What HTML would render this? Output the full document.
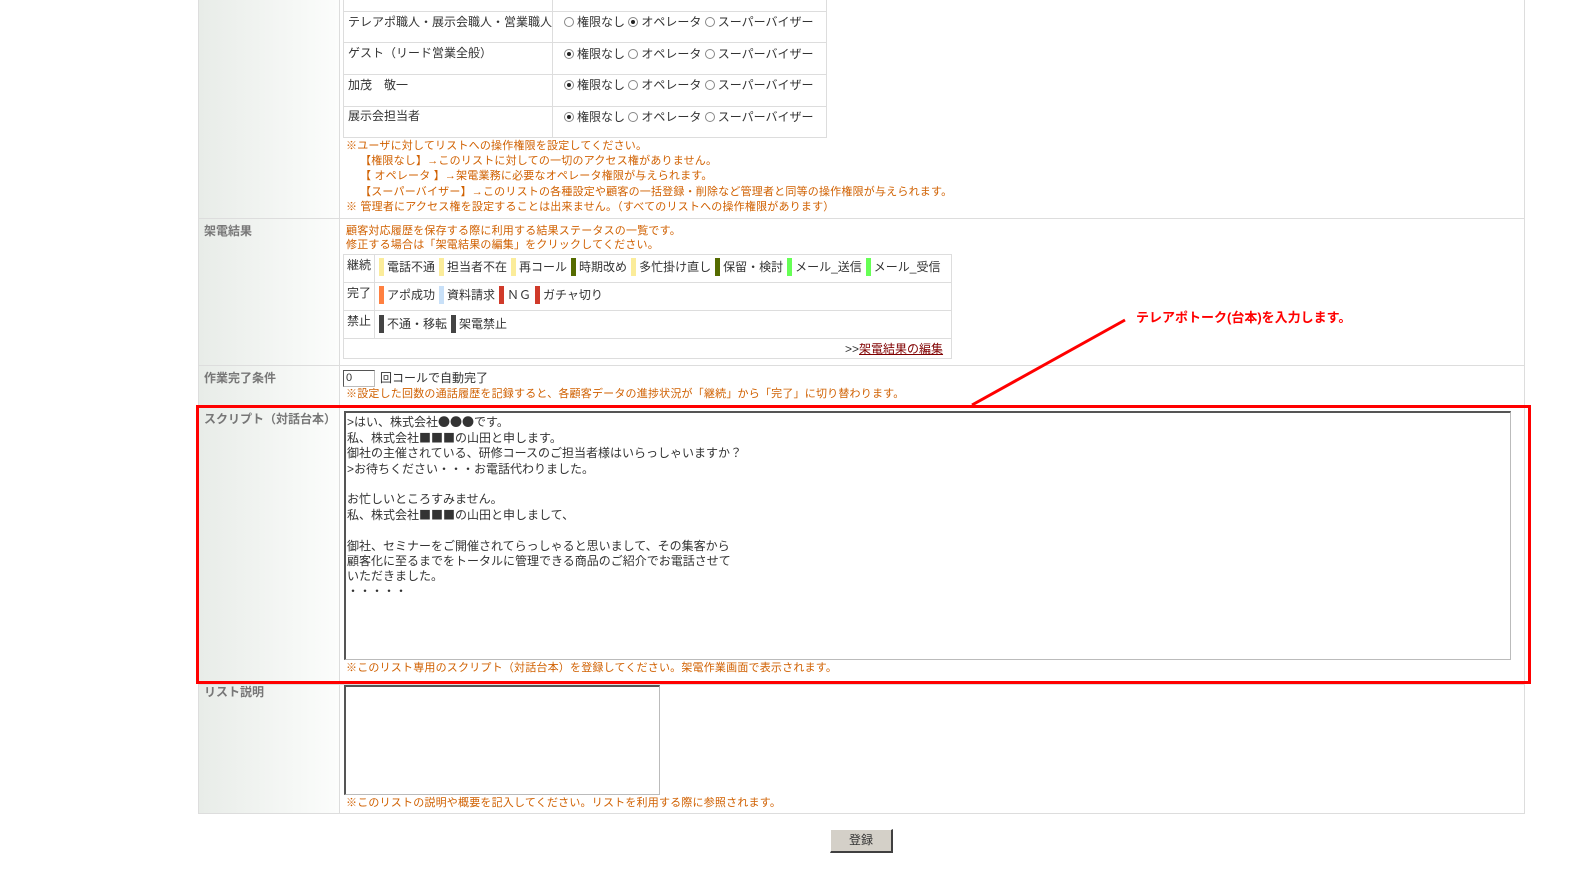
<!DOCTYPE html>
<html><head><meta charset="utf-8"><style>
*{margin:0;padding:0;box-sizing:border-box}
body{width:1592px;height:873px;background:#fff;position:relative;overflow:hidden;font-family:"Liberation Sans","Noto Sans CJK JP",sans-serif;font-size:12px;color:#333}
.a{position:absolute;white-space:nowrap;line-height:15px}
.hl{position:absolute;background:#ddd;height:1px}
.vl{position:absolute;background:#ddd;width:1px}
.lab{position:absolute;left:199px;width:140px;background:linear-gradient(90deg,#e8ece8,#f6f8f6 70%,#fcfdfc)}
.lt{color:#777;font-weight:bold}
.or{color:#d06000;font-size:11px;letter-spacing:0.2px}
.rd{display:inline-block;width:10px;height:10px;border:1px solid #888;border-radius:50%;vertical-align:-1px;margin-right:3px;background:#fff;position:relative}
.rd.on::after{content:"";position:absolute;left:2px;top:2px;width:4px;height:4px;border-radius:50%;background:#222}
.sw{display:inline-block;width:5px;height:18px;vertical-align:-5px;margin:0 3px 0 4px}
.ta{position:absolute;border:1px solid #bbb;border-top:2px solid #555;border-left:2px solid #555;background:#fff}
.j{font-family:"Noto Sans CJK JP",sans-serif;font-size:12px}
</style></head><body>
<div class="lab" style="top:0;height:813px"></div>
<div class="vl" style="left:198px;top:0;height:813px"></div>
<div class="vl" style="left:339px;top:0;height:813px"></div>
<div class="vl" style="left:1524px;top:0;height:813px"></div>
<div class="hl" style="left:198px;top:218px;width:1327px"></div>
<div class="hl" style="left:198px;top:365px;width:1327px"></div>
<div class="hl" style="left:198px;top:406px;width:1327px"></div>
<div class="hl" style="left:198px;top:684px;width:1327px"></div>
<div class="hl" style="left:198px;top:813px;width:1327px"></div>

<div class="vl" style="left:343px;top:0;height:138px"></div>
<div class="vl" style="left:552px;top:0;height:138px"></div>
<div class="vl" style="left:826px;top:0;height:138px"></div>
<div class="hl" style="left:343px;top:11px;width:484px"></div>
<div class="hl" style="left:343px;top:42px;width:484px"></div>
<div class="hl" style="left:343px;top:74px;width:484px"></div>
<div class="hl" style="left:343px;top:106px;width:484px"></div>
<div class="hl" style="left:343px;top:137px;width:484px"></div>
<div class="a" style="left:348px;top:15px">テレアポ職人・展示会職人・営業職人</div>
<div class="a" style="left:348px;top:46px">ゲスト（リード営業全般）</div>
<div class="a" style="left:348px;top:78px">加茂　敬一</div>
<div class="a" style="left:348px;top:109px">展示会担当者</div>
<div class="a" style="left:564px;top:15px"><span class="rd"></span>権限なし <span class="rd on"></span>オペレータ <span class="rd"></span>スーパーバイザー</div>
<div class="a" style="left:564px;top:47px"><span class="rd on"></span>権限なし <span class="rd"></span>オペレータ <span class="rd"></span>スーパーバイザー</div>
<div class="a" style="left:564px;top:78px"><span class="rd on"></span>権限なし <span class="rd"></span>オペレータ <span class="rd"></span>スーパーバイザー</div>
<div class="a" style="left:564px;top:110px"><span class="rd on"></span>権限なし <span class="rd"></span>オペレータ <span class="rd"></span>スーパーバイザー</div>
<div class="a or" style="left:346px;top:139px">※ユーザに対してリストへの操作権限を設定してください。</div>
<div class="a or" style="left:360px;top:154px">【権限なし】→このリストに対しての一切のアクセス権がありません。</div>
<div class="a or" style="left:360px;top:169px">【 オペレータ 】→架電業務に必要なオペレータ権限が与えられます。</div>
<div class="a or" style="left:360px;top:185px">【スーパーバイザー】→このリストの各種設定や顧客の一括登録・削除など管理者と同等の操作権限が与えられます。</div>
<div class="a or" style="left:346px;top:200px">※ 管理者にアクセス権を設定することは出来ません。（すべてのリストへの操作権限があります）</div>

<div class="a lt" style="left:204px;top:224px">架電結果</div>
<div class="a or" style="left:346px;top:224px">顧客対応履歴を保存する際に利用する結果ステータスの一覧です。</div>
<div class="a or" style="left:346px;top:238px">修正する場合は「架電結果の編集」をクリックしてください。</div>
<div class="vl" style="left:343px;top:254px;height:105px"></div>
<div class="vl" style="left:374px;top:254px;height:84px"></div>
<div class="vl" style="left:951px;top:254px;height:105px"></div>
<div class="hl" style="left:343px;top:254px;width:609px"></div>
<div class="hl" style="left:343px;top:282px;width:609px"></div>
<div class="hl" style="left:343px;top:310px;width:609px"></div>
<div class="hl" style="left:343px;top:338px;width:609px"></div>
<div class="hl" style="left:343px;top:358px;width:609px"></div>
<div class="a" style="left:347px;top:258px">継続</div>
<div class="a" style="left:347px;top:286px">完了</div>
<div class="a" style="left:347px;top:314px">禁止</div>
<div class="a" style="left:375px;top:258px"><span class="sw" style="background:#fbec9a"></span>電話不通<span class="sw" style="background:#fbec9a"></span>担当者不在<span class="sw" style="background:#fbec9a"></span>再コール<span class="sw" style="background:#556b00"></span>時期改め<span class="sw" style="background:#fbec9a"></span>多忙掛け直し<span class="sw" style="background:#556b00"></span>保留・検討<span class="sw" style="background:#66ff55"></span>メール_送信<span class="sw" style="background:#66ff55"></span>メール_受信</div>
<div class="a" style="left:375px;top:286px"><span class="sw" style="background:#ff8040"></span>アポ成功<span class="sw" style="background:#c8e0f8"></span>資料請求<span class="sw" style="background:#d03a2a"></span>ＮＧ<span class="sw" style="background:#d03a2a"></span>ガチャ切り</div>
<div class="a" style="left:375px;top:315px"><span class="sw" style="background:#444"></span>不通・移転<span class="sw" style="background:#444"></span>架電禁止</div>
<div class="a" style="left:845px;top:342px">&gt;&gt;<span style="color:#800000;text-decoration:underline">架電結果の編集</span></div>

<div class="a lt" style="left:204px;top:371px">作業完了条件</div>
<div class="ta" style="left:343px;top:370px;width:32px;height:17px;border-width:1px;font-size:11px;line-height:14px;padding-left:2px">0</div>
<div class="a" style="left:380px;top:371px">回コールで自動完了</div>
<div class="a or" style="left:346px;top:387px">※設定した回数の通話履歴を記録すると、各顧客データの進捗状況が「継続」から「完了」に切り替わります。</div>

<div class="a lt" style="left:204px;top:412px">スクリプト（対話台本）</div>
<div class="ta" style="left:344px;top:411px;width:1167px;height:249px;padding:1px 1px;line-height:15.2px;white-space:pre">&gt;はい、株式会社<span class="j">●●●</span>です。
私、株式会社<span class="j">■■■</span>の山田と申します。
御社の主催されている、研修コースのご担当者様はいらっしゃいますか？
&gt;お待ちください・・・お電話代わりました。

お忙しいところすみません。
私、株式会社<span class="j">■■■</span>の山田と申しまして、

御社、セミナーをご開催されてらっしゃると思いまして、その集客から
顧客化に至るまでをトータルに管理できる商品のご紹介でお電話させて
いただきました。
・・・・・</div>
<div class="a or" style="left:346px;top:661px">※このリスト専用のスクリプト（対話台本）を登録してください。架電作業画面で表示されます。</div>
<div style="position:absolute;left:196px;top:405px;width:1335px;height:279px;border:3px solid #f00"></div>

<div class="a lt" style="left:204px;top:685px">リスト説明</div>
<div class="ta" style="left:344px;top:685px;width:316px;height:110px"></div>
<div class="a or" style="left:346px;top:796px">※このリストの説明や概要を記入してください。リストを利用する際に参照されます。</div>

<div style="position:absolute;left:830px;top:829px;width:63px;height:24px;background:#d4d0c8;border:1px solid #fff;border-right:2px solid #404040;border-bottom:2px solid #404040;text-align:center;line-height:21px">登録</div>

<svg style="position:absolute;left:0;top:0" width="1592" height="873"><line x1="972" y1="405" x2="1125" y2="320" stroke="#f00" stroke-width="3"/></svg>
<div class="a" style="left:1136px;top:310px;color:#f00;font-weight:bold;font-size:13px">テレアポトーク(台本)を入力します。</div>
</body></html>
